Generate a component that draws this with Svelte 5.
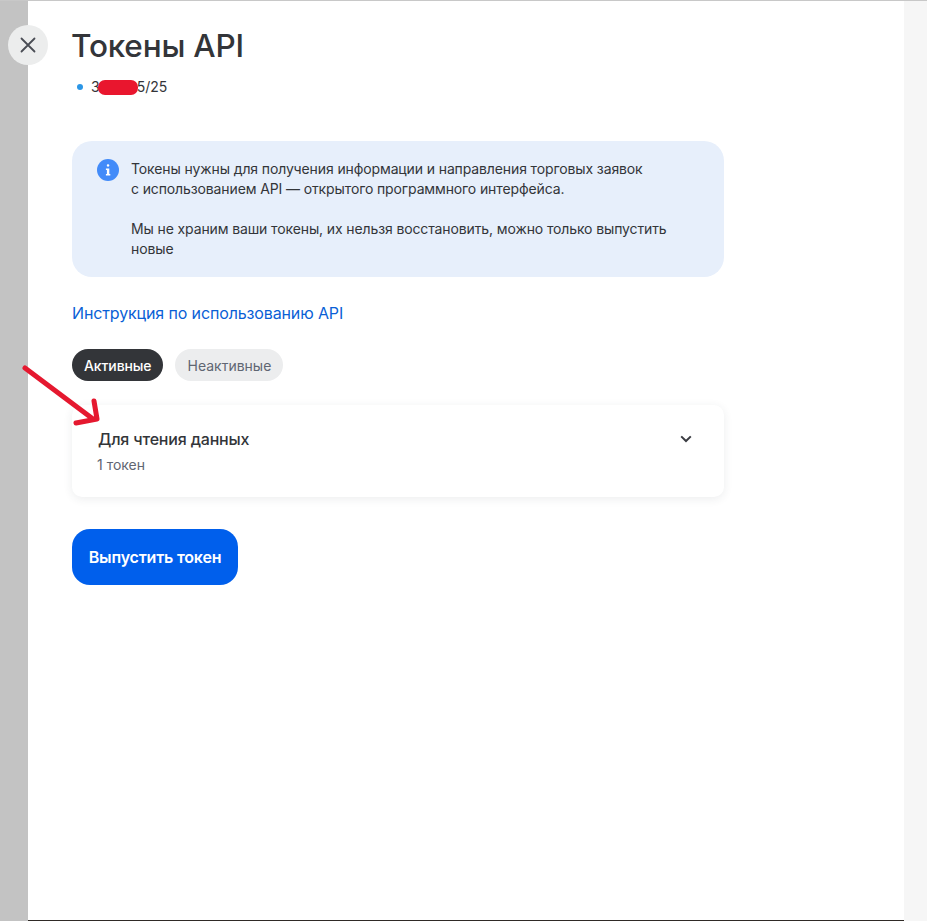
<script>
  let tab = $state('active');
</script>

<div class="page">
  <div class="rail"></div>
  <main class="main">
    <button class="close" aria-label="Закрыть">
      <svg width="18" height="18" viewBox="0 0 18 18" fill="none">
        <path d="M2.5 2.5l13 13M15.5 2.5l-13 13" stroke="#4a4d55" stroke-width="1.8" stroke-linecap="round" />
      </svg>
    </button>

    <div class="content">
      <h1>Токены API</h1>
      <div class="account">
        <span class="dot"></span>
        <span class="acc-no">3<span class="gap"></span>5/25<span class="scribble"></span></span>
      </div>

      <div class="notice">
        <svg class="info" width="22" height="22" viewBox="0 0 22 22">
          <circle cx="11" cy="11" r="11" fill="#428bf9" />
          <rect x="9.8" y="5.2" width="2.5" height="2.5" rx="1.1" fill="#fff" />
          <path d="M8.9 9.4h3.4v5.6h1v1.5H8.9V15h1v-4.1h-1z" fill="#fff" />
        </svg>
        <div class="notice-text">
          <p>Токены нужны для получения информации и направления торговых заявок<br />с использованием API — открытого программного интерфейса.</p>
          <p>Мы не храним ваши токены, их нельзя восстановить, можно только выпустить новые</p>
        </div>
      </div>

      <a class="link" href="#api">Инструкция по использованию API</a>

      <div class="tabs">
        <button class="tab" class:on={tab === 'active'} onclick={() => (tab = 'active')}>Активные</button>
        <button class="tab" class:on={tab === 'inactive'} onclick={() => (tab = 'inactive')}>Неактивные</button>
      </div>

      <div class="card">
        <div>
          <div class="card-title">Для чтения данных</div>
          <div class="card-sub">1 токен</div>
        </div>
        <svg class="chev" width="12" height="8" viewBox="0 0 12 8" fill="none">
          <path d="M1.2 1.4L6 6l4.8-4.6" stroke="#3a3c42" stroke-width="2" />
        </svg>
      </div>

      <button class="issue">Выпустить токен</button>
    </div>

    <!-- annotation drawn over the screenshot -->
    <svg class="arrow" width="80" height="64" viewBox="0 0 80 64" fill="none">
      <path d="M0 0L68 51M69 33L72 51L51 55" stroke="#e5182f" stroke-width="5" stroke-linecap="round" stroke-linejoin="round" />
    </svg>
  </main>
  <div class="strip"></div>
</div>

<style>
  :global(body) {
    margin: 0;
    background: #fff;
  }

  .page {
    display: flex;
    height: 921px;
    overflow: hidden;
    font-family: Inter, "Liberation Sans", sans-serif;
    color: #333539;
    border-top: 1px solid #c8c8c8;
    box-sizing: border-box;
  }

  .rail {
    flex: 0 0 28px;
    background: #c3c3c3;
  }

  .main {
    flex: 1;
    position: relative;
    background: #fff;
    border-bottom: 1px solid #2f2a26;
  }

  .strip {
    flex: 0 0 23px;
    background: #f6f6f6;
  }

  .close {
    position: absolute;
    left: -20px;
    top: 24px;
    width: 40px;
    height: 40px;
    border: 0;
    padding: 0;
    border-radius: 50%;
    background: #eceded;
    display: flex;
    align-items: center;
    justify-content: center;
  }

  .content {
    width: 652px;
    margin-left: 44px;
    padding-top: 26px;
  }

  h1 {
    margin: 0 0 0 -1px;
    font-size: 31.5px;
    line-height: 38px;
    font-weight: 500;
    letter-spacing: -0.2px;
    color: #333539;
  }

  .account {
    display: flex;
    align-items: center;
    gap: 8px;
    margin: 11px 0 0 5px;
    font-size: 14px;
    line-height: 22px;
    color: #333539;
  }

  .dot {
    width: 6px;
    height: 6px;
    border-radius: 50%;
    background: #2b96e6;
  }

  .acc-no {
    position: relative;
    display: inline-flex;
  }

  .gap {
    width: 37px;
  }

  .scribble {
    position: absolute;
    left: 7px;
    top: 4px;
    width: 40px;
    height: 15px;
    border-radius: 7px;
    background: #e9162e;
  }

  .notice {
    display: flex;
    gap: 12px;
    margin-top: 43px;
    padding: 18px 25px 18px 25px;
    background: #e7effb;
    border-radius: 20px;
  }

  .info {
    flex: none;
  }

  .notice-text {
    font-size: 14px;
    line-height: 20px;
    letter-spacing: -0.12px;
    color: #333539;
    width: 560px;
  }

  .notice-text p {
    margin: 0 0 20px;
  }

  .notice-text p:last-child {
    margin: 0;
  }

  .link {
    display: block;
    margin-top: 25px;
    font-size: 16px;
    line-height: 22px;
    letter-spacing: -0.13px;
    color: #0a5fd6;
    text-decoration: none;
  }

  .tabs {
    display: flex;
    gap: 12px;
    margin-top: 25px;
  }

  .tab {
    height: 32px;
    padding: 0 12px;
    border: 0;
    border-radius: 16px;
    background: #ecedee;
    color: #5f6672;
    font: 400 14px Inter, "Liberation Sans", sans-serif;
  }

  .tab.on {
    background: #333539;
    color: #fff;
    font-weight: 500;
    letter-spacing: -0.1px;
  }

  .card {
    display: flex;
    justify-content: space-between;
    align-items: flex-start;
    height: 92px;
    box-sizing: border-box;
    margin-top: 24px;
    padding: 24px 32px 0 26px;
    background: #fff;
    border-radius: 10px;
    box-shadow: 0 2px 10px rgba(40, 50, 70, 0.09);
  }

  .card-title {
    font-size: 16px;
    line-height: 20px;
    font-weight: 500;
    letter-spacing: -0.18px;
    color: #333539;
  }

  .card-sub {
    margin: 6px 0 0 -1px;
    font-size: 14px;
    line-height: 20px;
    color: #5f6672;
  }

  .chev {
    margin-top: 6px;
  }

  .issue {
    display: block;
    margin-top: 32px;
    height: 56px;
    width: 166px;
    border: 0;
    border-radius: 18px;
    background: #005fec;
    color: #fff;
    font: 600 16px Inter, "Liberation Sans", sans-serif;
    letter-spacing: -0.2px;
  }

  .arrow {
    position: absolute;
    left: -3px;
    top: 367px;
    overflow: visible;
  }
</style>
